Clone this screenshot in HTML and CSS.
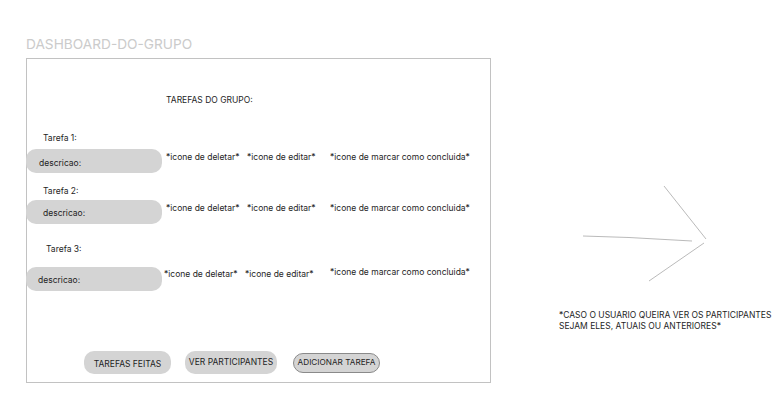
FILE: index.html
```html
<!DOCTYPE html>
<html lang="pt">
<head>
<meta charset="utf-8">
<title>Dashboard do grupo</title>
<link rel="stylesheet" href="styles.css">
</head>
<body>
<div class="page">
  <div class="board">
    <div class="title">DASHBOARD-DO-GRUPO</div>
    <div class="frame">
      <div class="heading">TAREFAS DO GRUPO:</div>

      <div class="task task-1">
        <div class="task-label">Tarefa 1:</div>
        <div class="task-row">
          <div class="pill">descricao:</div>
          <span class="act act-del">*icone de deletar*</span>
          <span class="act act-edit">*icone de editar*</span>
          <span class="act act-done">*icone de marcar como concluida*</span>
        </div>
      </div>

      <div class="task task-2">
        <div class="task-label">Tarefa 2:</div>
        <div class="task-row">
          <div class="pill">descricao:</div>
          <span class="act act-del">*icone de deletar*</span>
          <span class="act act-edit">*icone de editar*</span>
          <span class="act act-done">*icone de marcar como concluida*</span>
        </div>
      </div>

      <div class="task task-3">
        <div class="task-label">Tarefa 3:</div>
        <div class="task-row">
          <div class="pill">descricao:</div>
          <span class="act act-del">*icone de deletar*</span>
          <span class="act act-edit">*icone de editar*</span>
          <span class="act act-done">*icone de marcar como concluida*</span>
        </div>
      </div>

      <div class="buttons">
        <div class="btn btn-done">TAREFAS FEITAS</div>
        <div class="btn btn-people">VER PARTICIPANTES</div>
        <div class="btn btn-add">ADICIONAR TAREFA</div>
      </div>
    </div>
  </div>

  <div class="side">
    <svg class="arrow" width="150" height="96" viewBox="0 0 150 96" fill="none" stroke="#a8a8a8" stroke-width="0.8">
      <path d="M24 50 L70 51.5 L133 55"/>
      <path d="M105 0 L147 53"/>
      <path d="M145 57 L90 95"/>
    </svg>
    <div class="note">*CASO O USUARIO QUEIRA VER OS PARTICIPANTES<br>SEJAM ELES, ATUAIS OU ANTERIORES*</div>
  </div>
</div>
</body>
</html>
```

FILE: styles.css
```css
* { box-sizing: border-box; }

html, body {
  margin: 0;
  background: #ffffff;
}

body {
  font-family: Inter, "Noto Sans", "Liberation Sans", sans-serif;
  color: #1e1e1e;
  font-size: 8.5px;
  line-height: 11px;
}

.page {
  display: flex;
  align-items: flex-start;
  padding-left: 26px;
}

.board {
  display: flex;
  flex-direction: column;
}

.title {
  margin-top: 36px;
  height: 22px;
  font-size: 13.7px;
  line-height: 16px;
  color: #cbcbcb;
}

.frame {
  width: 465px;
  height: 325px;
  border: 1px solid #c2c2c2;
  display: flex;
  flex-direction: column;
}

.heading {
  margin-top: 36px;
  margin-left: 139px;
}

.task-label {
  margin-left: 16px;
}

.task-1 { margin-top: 27px; }
.task-1 .task-row { margin-top: 5px; }

.task-2 { margin-top: 13px; }
.task-2 .task-label { margin-left: 16px; }
.task-2 .task-row { margin-top: 3px; }

.task-3 { margin-top: 20px; }
.task-3 .task-label { margin-left: 19px; }
.task-3 .task-row { margin-top: 12px; }

.task-row {
  display: flex;
  align-items: flex-start;
  margin-left: -1px;
}

.pill {
  width: 136px;
  height: 24px;
  border-radius: 10px;
  background: #d4d4d4;
  padding-left: 13px;
  padding-top: 9px;
}

.task-2 .pill { padding-left: 17px; padding-top: 8px; }
.task-3 .pill { padding-left: 12px; padding-top: 8px; }

.act {
  margin-top: 3px;
  white-space: nowrap;
}

.act-del { width: 81px; margin-left: 4px; }
.act-edit { width: 83px; }

.task-3 .act { margin-top: 2px; }
.task-3 .act-del { margin-left: 2px; }
.task-3 .act-done { margin-top: 0; margin-left: 2px; }

.buttons {
  margin-top: auto;
  margin-bottom: 8px;
  margin-left: 57px;
  display: flex;
  align-items: center;
}

.btn {
  height: 23px;
  border-radius: 10px;
  background: #d4d4d4;
  display: flex;
  align-items: center;
  justify-content: center;
  white-space: nowrap;
}

.btn-done { width: 87px; padding-top: 4px; }
.btn-people { width: 92px; margin-left: 14px; padding-bottom: 1px; }
.btn-add {
  width: 87px;
  height: 20px;
  margin-left: 16px;
  border: 1px solid #8a8a8a;
  font-size: 8.2px;
}

.side {
  margin-left: 68px;
  padding-top: 186px;
  display: flex;
  flex-direction: column;
}

.arrow {
  display: block;
}

.note {
  margin-top: 28px;
  font-size: 8.5px;
  line-height: 11px;
  white-space: nowrap;
}
```
